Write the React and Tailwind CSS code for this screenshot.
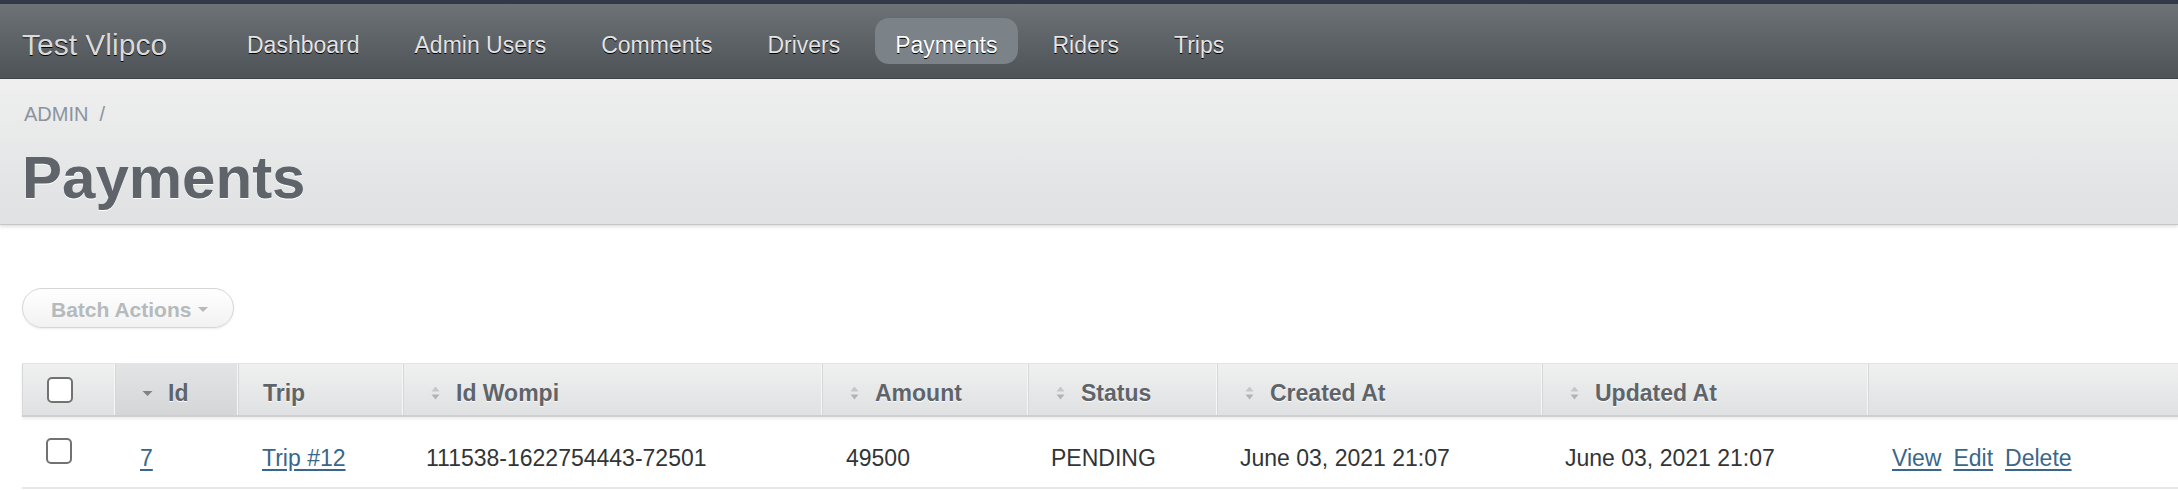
import React from 'react';

const navItems = ['Dashboard', 'Admin Users', 'Comments', 'Drivers', 'Payments', 'Riders', 'Trips'];

function SortBoth() {
  return (
    <svg width="11" height="16" viewBox="0 0 11 16" className="shrink-0">
      <path d="M1.5 6.5 L5.5 1.5 L9.5 6.5 Z" fill="#c3c7ca" />
      <path d="M1.5 9.5 L5.5 14.5 L9.5 9.5 Z" fill="#b0b4b7" />
    </svg>
  );
}

function SortDesc() {
  return (
    <svg width="11" height="16" viewBox="0 0 11 16" className="shrink-0">
      <path d="M0.5 6 L5.5 11 L10.5 6 Z" fill="#7e8387" />
    </svg>
  );
}

function Checkbox() {
  return <span className="block w-[26px] h-[26px] rounded-[5px] border-2 border-[#727272] bg-white" />;
}

const columns = [
  { key: 'check', label: null, width: 'w-[93px]', sort: null },
  { key: 'id', label: 'Id', width: 'w-[123px]', sort: 'desc' },
  { key: 'trip', label: 'Trip', width: 'w-[165px]', sort: null },
  { key: 'wompi', label: 'Id Wompi', width: 'w-[419px]', sort: 'both' },
  { key: 'amount', label: 'Amount', width: 'w-[206px]', sort: 'both' },
  { key: 'status', label: 'Status', width: 'w-[189px]', sort: 'both' },
  { key: 'created', label: 'Created At', width: 'w-[325px]', sort: 'both' },
  { key: 'updated', label: 'Updated At', width: 'w-[326px]', sort: 'both' },
  { key: 'actions', label: null, width: 'w-[340px]', sort: null },
];

export default function App() {
  return (
    <div className="min-h-[490px] bg-white font-['Liberation_Sans',Arial,sans-serif] overflow-hidden">
      {/* header */}
      <div className="h-[4px] bg-[#343949]" />
      <div className="h-[75px] flex items-center px-[22px] bg-gradient-to-b from-[#6d7276] to-[#4e5357] border-b border-[#3f4347]">
        <h1 className="w-[205px] shrink-0 pt-[8px] text-[30px] leading-none text-[#dadada] [text-shadow:0_1px_0_#000]">
          Test Vlipco
        </h1>
        <ul className="flex items-center gap-[15px]">
          {navItems.map((item) => (
            <li key={item}>
              <a
                className={
                  item === 'Payments'
                    ? 'block px-[20px] h-[46px] pt-[8px] leading-[38px] rounded-[14px] bg-[#7b8288] text-[23px] text-white [text-shadow:0_1px_0_#000]'
                    : 'block px-[20px] h-[46px] pt-[8px] leading-[38px] rounded-[14px] text-[23px] text-[#e4e4e4] [text-shadow:0_1px_0_#000]'
                }
              >
                {item}
              </a>
            </li>
          ))}
        </ul>
      </div>

      {/* title bar */}
      <div className="px-[22px] pt-[23px] pb-[16px] bg-gradient-to-b from-[#efefef] to-[#dfe1e2] border-b border-[#c6c6c6] shadow-[0_2px_3px_rgba(0,0,0,0.12)]">
        <div className="h-[24px] leading-[24px] text-[20px] text-[#8a949e] pl-[2px]">
          <span>ADMIN</span>
          <span className="ml-[11px]">/</span>
        </div>
        <h2 className="mt-[22px] h-[60px] leading-[60px] text-[60px] font-bold text-[#5e6469] [text-shadow:0_1px_0_#fff]">
          Payments
        </h2>
      </div>

      {/* content */}
      <div className="pl-[22px] pt-[63px]">
        <button className="h-[40px] w-[212px] flex items-center pl-[28px] pt-[3px] rounded-full border border-[#d6d6d6] bg-gradient-to-b from-white to-[#f2f2f2] shadow-[0_1px_2px_rgba(0,0,0,0.08)] text-[21px] font-bold text-[#b5babd]">
          Batch Actions
          <svg width="10" height="6" viewBox="0 0 10 6" className="ml-[7px]">
            <path d="M0 0 L10 0 L5 5 Z" fill="#b5babd" />
          </svg>
        </button>

        <div className="mt-[35px] w-[2400px]">
          {/* table header */}
          <div className="flex h-[54px] border-t border-[#e4e4e4] border-b-2 border-b-[#cfcfcf] shadow-[0_2px_3px_rgba(0,0,0,0.08)] bg-gradient-to-b from-[#f0f0f0] to-[#dfe1e2]">
            {columns.map((c) => (
              <div
                key={c.key}
                className={
                  (c.sort === 'desc'
                    ? 'bg-gradient-to-b from-[#e3e4e5] to-[#d4d6d8] '
                    : '') +
                  c.width +
                  ' shrink-0 flex items-center border-l border-l-[#d5d7d9] border-r border-r-[#f7f7f7] text-[23px] font-bold text-[#5e6469] [text-shadow:0_1px_0_#fff] ' +
                  (c.sort ? 'pl-[26px]' : 'pl-[24px]')
                }
              >
                {c.key === 'check' && <Checkbox />}
                {(c.sort || c.label) && (
                  <div className="flex items-center mt-[7px]">
                    {c.sort === 'both' && <SortBoth />}
                    {c.sort === 'desc' && <SortDesc />}
                    {c.label && <span className={c.sort ? 'ml-[15px]' : ''}>{c.label}</span>}
                  </div>
                )}
              </div>
            ))}
          </div>

          {/* row */}
          <div className="flex h-[72px] border-b-2 border-[#e8e8e8] text-[23px] leading-[24px] text-[#323537]">
            <div className="w-[93px] shrink-0 pl-[24px] pt-[21px]">
              <Checkbox />
            </div>
            <div className="w-[123px] shrink-0 pl-[25px] pt-[29px]">
              <a className="text-[#38678b] underline underline-offset-[3px]">7</a>
            </div>
            <div className="w-[165px] shrink-0 pl-[24px] pt-[29px]">
              <a className="text-[#38678b] underline underline-offset-[3px]">Trip #12</a>
            </div>
            <div className="w-[419px] shrink-0 pl-[23px] pt-[29px]">111538-1622754443-72501</div>
            <div className="w-[206px] shrink-0 pl-[24px] pt-[29px]">49500</div>
            <div className="w-[189px] shrink-0 pl-[23px] pt-[29px]">PENDING</div>
            <div className="w-[325px] shrink-0 pl-[23px] pt-[29px]">June 03, 2021 21:07</div>
            <div className="w-[326px] shrink-0 pl-[23px] pt-[29px]">June 03, 2021 21:07</div>
            <div className="w-[340px] shrink-0 pl-[24px] pt-[29px] flex gap-[12px]">
              <a className="text-[#38678b] underline underline-offset-[3px]">View</a>
              <a className="text-[#38678b] underline underline-offset-[3px]">Edit</a>
              <a className="text-[#38678b] underline underline-offset-[3px]">Delete</a>
            </div>
          </div>
        </div>
      </div>
    </div>
  );
}
